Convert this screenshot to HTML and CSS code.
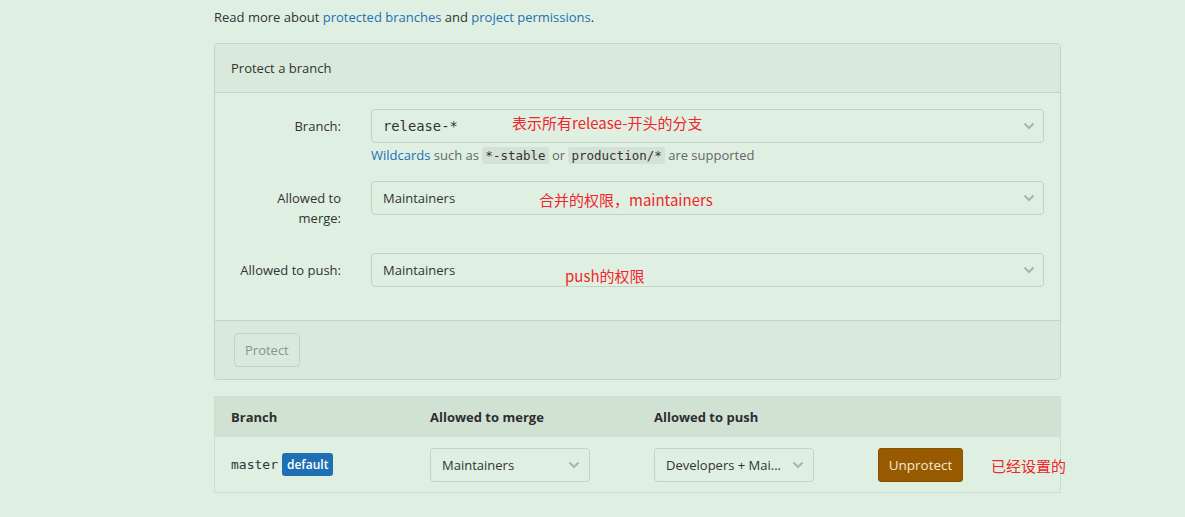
FILE: index.html
```html
<!DOCTYPE html>
<html lang="en">
<head>
<meta charset="utf-8">
<title>Protected branches</title>
<link rel="stylesheet" href="styles.css">
</head>
<body>
<div class="page">
  <p class="intro">Read more about <a href="#">protected branches</a> and <a href="#">project permissions</a>.</p>

  <div class="panel">
    <div class="panel-head">Protect a branch</div>
    <div class="panel-body">
      <div class="form-row">
        <label class="form-label">Branch:</label>
        <div class="field">
          <div class="select mono-input">release-*<svg class="chev" viewBox="0 0 12 8"><path d="M1.5 1.5L6 6l4.5-4.5"/></svg></div>
          <p class="help"><a href="#">Wildcards</a> such as <code>*-stable</code> or <code>production/*</code> are supported</p>
        </div>
      </div>
      <div class="form-row">
        <label class="form-label">Allowed to merge:</label>
        <div class="field">
          <div class="select">Maintainers<svg class="chev" viewBox="0 0 12 8"><path d="M1.5 1.5L6 6l4.5-4.5"/></svg></div>
        </div>
      </div>
      <div class="form-row last">
        <label class="form-label">Allowed to push:</label>
        <div class="field">
          <div class="select">Maintainers<svg class="chev" viewBox="0 0 12 8"><path d="M1.5 1.5L6 6l4.5-4.5"/></svg></div>
        </div>
      </div>
    </div>
    <div class="panel-foot"><button class="btn-protect">Protect</button></div>
  </div>

  <div class="table">
    <div class="thead">
      <div class="cell">Branch</div>
      <div class="cell">Allowed to merge</div>
      <div class="cell">Allowed to push</div>
      <div class="cell"></div>
    </div>
    <div class="trow">
      <div class="cell"><span class="branch">master</span><span class="badge">default</span></div>
      <div class="cell"><div class="select small">Maintainers<svg class="chev" viewBox="0 0 12 8"><path d="M1.5 1.5L6 6l4.5-4.5"/></svg></div></div>
      <div class="cell"><div class="select small"><span class="ellip">Developers + Mai...</span><svg class="chev" viewBox="0 0 12 8"><path d="M1.5 1.5L6 6l4.5-4.5"/></svg></div></div>
      <div class="cell"><button class="btn-unprotect">Unprotect</button></div>
    </div>
  </div>

  <span class="note n1">表示所有release-开头的分支</span>
  <span class="note n2">合并的权限，maintainers</span>
  <span class="note n3">push的权限</span>
  <span class="note n4">已经设置的</span>
</div>
</body>
</html>
```

FILE: styles.css
```css
html, body {
  margin: 0;
  padding: 0;
  background: #dff0e2;
}
body {
  font-family: "Open Sans", "Noto Sans CJK SC", sans-serif;
  font-size: 13px;
  color: #2e2e2e;
}
a {
  color: #1f6fb5;
  text-decoration: none;
}
.page {
  position: relative;
  width: 847px;
  margin-left: 214px;
  padding-top: 7px;
  height: 510px;
}
.intro {
  margin: 0 0 16px;
  line-height: 20px;
  color: #333;
}
.panel {
  border: 1px solid #c3d3c5;
  border-radius: 4px;
}
.panel-head {
  background: #d9e9db;
  border-bottom: 1px solid #c3d3c5;
  border-radius: 4px 4px 0 0;
  padding: 0 16px;
  height: 48px;
  line-height: 48px;
  color: #333;
}
.panel-body {
  padding: 16px 16px 15px 16px;
}
.form-row {
  display: flex;
  margin-bottom: 16px;
}
.form-row.last { margin-bottom: 16px; }
.form-label {
  width: 106px;
  margin: 0 30px 0 4px;
  text-align: right;
  padding: 7px 0 9px;
  line-height: 20px;
  color: #333;
  flex: none;
}
.field { flex: 1; }
.select {
  position: relative;
  height: 32px;
  line-height: 32px;
  border: 1px solid #c3d3c5;
  border-radius: 4px;
  padding: 0 11px;
  color: #333;
}
.mono-input {
  font-family: "DejaVu Sans Mono", monospace;
  font-size: 13.8px;
}
.chev {
  position: absolute;
  right: 8px;
  top: 12px;
  width: 12px;
  height: 8px;
  fill: none;
  stroke: #a9b5ab;
  stroke-width: 2;
}
.help {
  margin: 3px 0 0;
  line-height: 18px;
  color: #666;
}
code {
  font-family: "DejaVu Sans Mono", monospace;
  font-size: 12.5px;
  background: #d3e2d5;
  color: #333;
  border-radius: 3px;
  padding: 1px 3px;
}
.panel-foot {
  border-top: 1px solid #c3d3c5;
  background: #d9e9db;
  padding: 12px 19px;
  border-radius: 0 0 4px 4px;
}
.btn-protect {
  font-family: inherit;
  font-size: 13px;
  height: 34px;
  padding: 0 10px;
  background: transparent;
  border: 1px solid #c3d3c5;
  border-radius: 4px;
  color: #8a948c;
}
.table {
  margin-top: 16px;
  border: 1px solid #cfdcd1;
}
.thead, .trow {
  display: grid;
  grid-template-columns: 199px 224px 224px 1fr;
  align-items: center;
}
.thead {
  background: #d1e2d3;
  height: 40px;
  font-weight: bold;
  color: #2e2e2e;
}
.trow {
  height: 55px;
}
.cell { padding-left: 16px; }
.branch {
  font-family: "DejaVu Sans Mono", monospace;
  font-size: 13px;
  color: #333;
}
.badge {
  display: inline-block;
  margin-left: 4px;
  background: #1f6fb5;
  color: #fff;
  font-size: 12px;
  font-weight: 600;
  line-height: 23px;
  padding: 0 5px;
  border-radius: 3px;
}
.select.small {
  width: 136px;
}
.select.small .chev { right: 9px; }
.ellip { white-space: nowrap; }
.btn-unprotect {
  font-family: inherit;
  font-size: 13.5px;
  height: 34px;
  width: 85px;
  background: #985a00;
  border: 1px solid #8a5100;
  border-radius: 3px;
  color: #f4e8d2;
}
.note {
  position: absolute;
  color: #f0262a;
  font-family: "Noto Sans CJK SC", sans-serif;
  font-size: 15px;
  line-height: 20px;
  white-space: nowrap;
}
.n1 { left: 298px; top: 113px; }
.n2 { left: 325px; top: 190px; }
.n3 { left: 351px; top: 266px; }
.n4 { left: 777px; top: 456px; font-size: 15px; }
```
